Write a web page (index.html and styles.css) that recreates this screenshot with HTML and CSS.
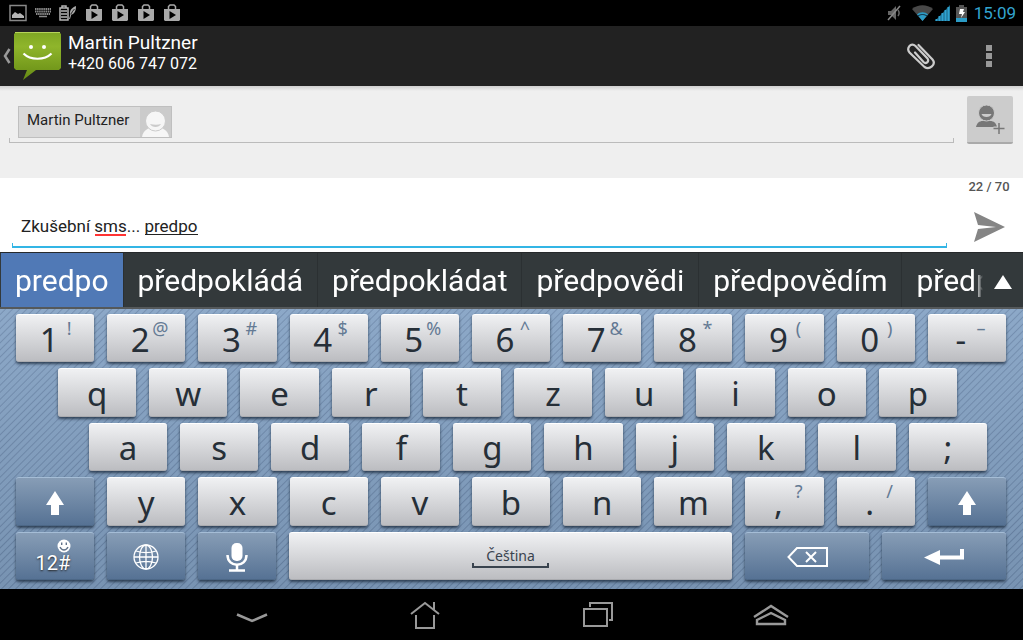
FILE: index.html
```
<!DOCTYPE html>
<html lang="cs">
<head>
    <meta charset="UTF-8">
    <meta name="viewport" content="width=device-width, initial-scale=1.0">
    <title>Martin Pultzner</title>
    <link rel="stylesheet" href="styles.css">
</head>
<body>
    <svg class="defs" aria-hidden="true">
        <symbol id="store" viewBox="0 0 18 18">
            <path d="M1 5h16v11l-1 1H2l-1-1z" fill="#a9a9a9"/>
            <path d="M5.500 5V2.500L7 1h4l1.500 1.500V5" fill="none" stroke="#a9a9a9" stroke-width="1.500"/>
            <path d="M6.500 7v8l6.500-4z" fill="#000"/>
        </symbol>
        <symbol id="shift" viewBox="0 0 18 24">
            <path d="M9 0l9 14h-5v10H5V14H0z" fill="#fff"/>
        </symbol>
    </svg>

    <div class="screen">
        <div class="status-bar">
            <div class="status-icons">
                <svg width="18" height="18" viewBox="0 0 18 18"><path d="M1 1.500h16v15H1z" fill="none" stroke="#888" stroke-width="1.500"/><path d="M3 14v-3l3-3 3 2 2-1 4 3v2z" fill="#b5b5b5"/></svg>
                <svg width="16" height="10" viewBox="0 0 16 10"><path d="M0 1h16M0 3.500h16M1 6h14" stroke="#8a8a8a" stroke-width="1.800" stroke-dasharray="1.500 .6"/><path d="M4 8.500h8" stroke="#8a8a8a" stroke-width="1.500"/></svg>
                <svg width="18" height="16" viewBox="0 0 18 16"><path d="M1 3h8v12H1zM3 3V1h4v2M2 6h6M2 9h6M2 12h6" fill="none" stroke="#b5b5b5" stroke-width="1.500"/><path d="M17 1c-5 2-7 5-5.500 9 4-1 5.500-4 5.500-9z" fill="#a9a9a9"/><path d="M10.500 14c1-4 2-7 5-10" fill="none" stroke="#000" stroke-width=".8"/><path d="M10.500 14l1.500-5" stroke="#a9a9a9"/></svg>
                <svg width="18" height="18"><use href="#store"/></svg>
                <svg width="18" height="18"><use href="#store"/></svg>
                <svg width="18" height="18"><use href="#store"/></svg>
                <svg width="18" height="18"><use href="#store"/></svg>
            </div>
            <div class="status-info">
                <svg class="mute" width="14" height="16" viewBox="0 0 14 16"><path d="M1 6h3l5-5v14l-5-5H1z" fill="#666"/><path d="M11 5c1.500 2 1.500 4 0 6" fill="none" stroke="#666" stroke-width="1.500"/><path d="M13 1L1 15" stroke="#888" stroke-width="1.500"/></svg>
                <svg width="21" height="16" viewBox="0 0 21 16"><path d="M0 4C6-1 15-1 21 4L10.500 16z" fill="#484848"/><path d="M5 9.500c3-3 8-3 11 0L10.500 16z" fill="#2c9cc6"/><path d="M6 11c3-2 6-2 9 0" fill="none" stroke="#123" stroke-width="1"/></svg>
                <svg width="15" height="16" viewBox="0 0 15 16"><path d="M0 16L15 0v16z" fill="#1c6785"/><path d="M1.500 16v-2M4.500 16v-5M7.500 16V8M10.500 16V5M13.500 16V2" stroke="#2fa3d0" stroke-width="2"/></svg>
                <svg class="battery" width="11" height="17" viewBox="0 0 11 17"><path d="M0 2h3V0h5v2h3v15H0z" fill="#555"/><path d="M0 13h11v4H0z" fill="#2c9cc6"/><path d="M4 4h4L7 7h2l-4 6 1-4H3z" fill="#fff"/></svg>
                <span class="clock">15:09</span>
            </div>
        </div>

        <header class="action-bar">
            <button class="back" aria-label="Zpět">
                <svg width="8" height="16" viewBox="0 0 8 16"><path d="M6.500 1L2 8l4.500 7" fill="none" stroke="#999" stroke-width="2.500"/></svg>
                <svg width="47" height="49" viewBox="0 0 47 49">
                    <defs><linearGradient id="green" x2="0" y2="1"><stop offset="0" stop-color="#7ea623"/><stop offset=".3" stop-color="#8fb52b"/><stop offset="1" stop-color="#668b14"/></linearGradient></defs>
                    <path d="M2 0h43l2 2v34l-2 2H22L9 48l4-10H2l-2-2V2z" fill="url(#green)"/>
                    <path d="M1 .5h45" stroke="#b6d45a"/>
                    <circle cx="17" cy="15" r="2" fill="#fff"/><circle cx="30" cy="15" r="2" fill="#fff"/>
                    <path d="M9.500 21.500c7 7 21 7 28 0" fill="none" stroke="#fff" stroke-width="2.200"/>
                </svg>
            </button>
            <div class="contact">
                <h1>Martin Pultzner</h1>
                <p>+420 606 747 072</p>
            </div>
            <button class="bar-button attach" aria-label="Přiložit">
                <svg width="29" height="27" viewBox="0 0 29 27"><path d="M11.500 2l14 14.500c4 5-3 11-8 7.500L2.500 9.500C-1 5 4-1 8.500 3L20.500 15.500c2 3-1.500 6-4 3.500L8 9.500" fill="none" stroke="#ccc" stroke-width="2.200" stroke-linecap="round"/></svg>
            </button>
            <button class="bar-button" aria-label="Další možnosti">
                <svg width="6" height="22" viewBox="0 0 6 22"><path d="M0 0h6v6H0zM0 8h6v6H0zM0 16h6v6H0z" fill="#999"/></svg>
            </button>
        </header>

        <section class="recipients">
            <div class="recipient-field">
                <button class="chip">
                    <span>Martin Pultzner</span>
                    <svg width="31" height="30" viewBox="0 0 31 30"><path d="M0 0h31v30H0z" fill="#cbcbcb"/><path d="M2 30c1-7 7-10 13.500-10S28 23 29 30z" fill="#f6f6f6"/><circle cx="15.500" cy="14" r="10" fill="#f6f6f6" stroke="#cbcbcb"/><path d="M10 17c4 1 8 1 11 0-2 4-9 4-11 0z" fill="#cbcbcb"/></svg>
                </button>
                <input class="recipient-input" type="text" aria-label="Příjemce">
            </div>
            <button class="add-contact" aria-label="Přidat příjemce">
                <svg width="30" height="30" viewBox="0 0 30 30"><path d="M0 23c1-4 3-6 7-6h7c4 0 6 2 7 6z" fill="#777"/><circle cx="10.500" cy="9" r="8" fill="#777" stroke="#ccc"/><path d="M5.500 10h10c-1 4-9 4-10 0z" fill="#ccc"/><path d="M23 19v11M17.500 24.500h11" stroke="#ccc" stroke-width="4"/><path d="M23 19v11M17.500 24.500h11" stroke="#777" stroke-width="1.500"/></svg>
            </button>
        </section>

        <section class="compose">
            <input class="message" type="text" aria-label="Zpráva" value="Zkušební sms... predpo">
            <div class="send-box">
                <span class="counter">22 / 70</span>
                <button class="send" aria-label="Odeslat">
                    <svg width="31" height="30" viewBox="0 0 31 30"><path d="M0 0l31 15L0 30l4-13 18-2L4 13z" fill="#858585"/></svg>
                </button>
            </div>
        </section>

        <div class="suggestions">
            <div class="words">
                <button class="word active">predpo</button>
                <button class="word">předpokládá</button>
                <button class="word">předpokládat</button>
                <button class="word">předpovědi</button>
                <button class="word">předpovědím</button>
                <button class="word">předp</button>
            </div>
            <button class="more" aria-label="Více návrhů">
                <svg width="18" height="14" viewBox="0 0 18 14"><path d="M9 0l9 14H0z" fill="#fff"/></svg>
            </button>
        </div>

        <div class="keyboard">
            <div class="row">
                <button class="key dual"><span>1</span><small>!</small></button>
                <button class="key dual"><span>2</span><small>@</small></button>
                <button class="key dual"><span>3</span><small>#</small></button>
                <button class="key dual"><span>4</span><small>$</small></button>
                <button class="key dual"><span>5</span><small>%</small></button>
                <button class="key dual"><span>6</span><small>^</small></button>
                <button class="key dual"><span>7</span><small>&amp;</small></button>
                <button class="key dual"><span>8</span><small>*</small></button>
                <button class="key dual"><span>9</span><small>(</small></button>
                <button class="key dual"><span>0</span><small>)</small></button>
                <button class="key dual"><span>-</span><small>–</small></button>
            </div>
            <div class="row row-q">
                <button class="key">q</button>
                <button class="key">w</button>
                <button class="key">e</button>
                <button class="key">r</button>
                <button class="key">t</button>
                <button class="key">z</button>
                <button class="key">u</button>
                <button class="key">i</button>
                <button class="key">o</button>
                <button class="key">p</button>
            </div>
            <div class="row row-a">
                <button class="key">a</button>
                <button class="key">s</button>
                <button class="key">d</button>
                <button class="key">f</button>
                <button class="key">g</button>
                <button class="key">h</button>
                <button class="key">j</button>
                <button class="key">k</button>
                <button class="key">l</button>
                <button class="key">;</button>
            </div>
            <div class="row">
                <button class="key blue" aria-label="Shift"><svg width="18" height="24"><use href="#shift"/></svg></button>
                <button class="key">y</button>
                <button class="key">x</button>
                <button class="key">c</button>
                <button class="key">v</button>
                <button class="key">b</button>
                <button class="key">n</button>
                <button class="key">m</button>
                <button class="key dual"><span>,</span><small>?</small></button>
                <button class="key dual"><span>.</span><small>/</small></button>
                <button class="key blue" aria-label="Shift"><svg width="18" height="24"><use href="#shift"/></svg></button>
            </div>
            <div class="row row-space">
                <button class="key blue symbols">
                    <svg width="14" height="14" viewBox="0 0 14 14"><circle cx="7" cy="7" r="6.500" fill="#fff"/><path d="M4.700 3.500v2.500M9.300 3.500v2.500M3 8c2 4 6 4 8 0" fill="none" stroke="#61738a" stroke-width="1.400"/></svg>
                    <span>12#</span>
                </button>
                <button class="key blue" aria-label="Jazyk">
                    <svg width="26" height="26" viewBox="0 0 26 26" fill="none" stroke="#fff" stroke-width="1.300"><circle cx="13" cy="13" r="12"/><ellipse cx="13" cy="13" rx="6.500" ry="12"/><path d="M13 1v24M1 13h24M3 7c6 2 14 2 20 0M3 19c6-2 14-2 20 0"/></svg>
                </button>
                <button class="key blue" aria-label="Hlasové zadávání">
                    <svg width="22" height="29" viewBox="0 0 22 29"><rect x="5.500" y="0" width="11" height="18" rx="5" fill="#fff"/><path d="M1.500 12c0 13 19 13 19 0M11 22v5M3 27.500h16" fill="none" stroke="#fff" stroke-width="2.500"/></svg>
                </button>
                <button class="key space"><span>Čeština</span></button>
                <button class="key blue" aria-label="Smazat">
                    <svg width="41" height="20" viewBox="0 0 41 20" fill="none" stroke="#fff" stroke-width="2"><path d="M10 1h30v18H10L1.500 10z"/><path d="M19 5l10 10M29 5L19 15"/></svg>
                </button>
                <button class="key blue" aria-label="Enter">
                    <svg width="40" height="16" viewBox="0 0 40 16"><path d="M0 8.500L16 1v5.500h20V0h4v10.500H16V16z" fill="#fff"/></svg>
                </button>
            </div>
        </div>

        <nav class="nav-bar">
            <button aria-label="Skrýt klávesnici"><svg width="32" height="16" viewBox="0 0 32 16"><path d="M1 7.500l15 6.500 15-6.500" fill="none" stroke="#999" stroke-width="2.500"/></svg></button>
            <button aria-label="Domů"><svg width="30" height="28" viewBox="0 0 30 28"><path d="M1 13L15 2l14 11M24 9V1M6 14v13h18V14" fill="none" stroke="#999" stroke-width="2"/></svg></button>
            <button aria-label="Poslední aplikace"><svg width="30" height="25" viewBox="0 0 30 25"><path d="M1 7h23v17H1zM7 5V1h22v17h-3" fill="none" stroke="#999" stroke-width="2"/></svg></button>
            <button aria-label="Panel aplikací"><svg width="36" height="22" viewBox="0 0 36 22"><path d="M1 13L18 2l17 11M4 20v-4l14-7 14 7v4z" fill="none" stroke="#999" stroke-width="2.400"/></svg></button>
        </nav>
    </div>
</body>
</html>
```
FILE: styles.css
```
* {
    box-sizing: border-box;
    margin: 0;
    padding: 0;
}

body {
    background-color: #000;
    font-family: Roboto, "Noto Sans", sans-serif;
}

button, input {
    background: none;
    border: none;
    font-family: inherit;
    color: inherit;
}

button { cursor: pointer; }
svg { display: block; flex: none; }
.defs { position: absolute; width: 0; height: 0; }

.screen {
    min-height: 100vh;
    display: flex;
    flex-direction: column;
}

/* status bar */
.status-bar {
    height: 26px;
    padding: 0 7px 0 9px;
    display: flex;
    align-items: center;
    justify-content: space-between;
}

.status-icons {
    display: flex;
    align-items: center;
    gap: 8px;
}

.status-info {
    display: flex;
    align-items: center;
    gap: 2px;
}

.mute { margin-right: 9px; }
.battery { margin: 0 5px 0 4px; }

.clock {
    font-size: 17px;
    line-height: 24px;
    color: #33a5d0;
}

/* action bar */
.action-bar {
    height: 60px;
    padding: 0 4px 0 3px;
    display: flex;
    align-items: center;
    background-color: #222;
    color: #fff;
}

.back {
    display: flex;
    align-items: center;
    gap: 3px;
}

.contact {
    flex: 1;
    padding: 0 0 6px 7px;
}

.contact h1 {
    font-size: 19px;
    line-height: 22px;
    font-weight: 400;
}

.contact p {
    font-size: 16px;
    line-height: 20px;
}

.bar-button {
    width: 60px;
    height: 60px;
    margin-left: 4px;
    display: flex;
    align-items: center;
    justify-content: center;
}

.attach { margin-right: 4px; }

/* recipients */
.recipients {
    height: 92px;
    padding: 10px 10px 0 9px;
    display: flex;
    gap: 13px;
    background: linear-gradient(#d0d0d0, #efefef 5px);
}

.recipient-field {
    flex: 1;
    height: 47px;
    padding: 10px 9px 0;
    display: flex;
    align-items: flex-start;
    border-bottom: 1px solid #bbb;
    background:
        linear-gradient(#bbb, #bbb) left bottom / 1px 4px no-repeat,
        linear-gradient(#bbb, #bbb) right bottom / 1px 4px no-repeat;
}

.chip {
    height: 32px;
    display: flex;
    align-items: center;
    justify-content: space-between;
    background-color: #dadada;
    border: 1px solid #bfbfbf;
    font-size: 15px;
    color: #222;
}

.chip span { padding: 0 11px 4px 8px; }

.recipient-input {
    flex: 1;
    height: 32px;
    outline: none;
}

.add-contact {
    width: 46px;
    height: 48px;
    padding-left: 2px;
    display: flex;
    align-items: center;
    justify-content: center;
    background-color: #ccc;
    border-bottom: 2px solid #aaa;
    border-radius: 2px;
}

/* message */
.compose {
    height: 74px;
    padding: 0 12px;
    display: flex;
    gap: 20px;
    background-color: #fff;
}

.message {
    flex: 1;
    height: 44px;
    margin-top: 26px;
    padding: 0 9px;
    outline: none;
    font-size: 17px;
    color: #222;
    /* field outline, then the spelling and composing underlines */
    background:
        linear-gradient(#33b5e5, #33b5e5) left bottom / 100% 2px no-repeat,
        linear-gradient(#33b5e5, #33b5e5) left bottom / 1px 5px no-repeat,
        linear-gradient(#33b5e5, #33b5e5) right bottom / 1px 5px no-repeat,
        linear-gradient(#f33, #f33) 83px 30px / 31px 2px no-repeat,
        linear-gradient(#222, #222) 133px 30px / 53px 1px no-repeat;
}

.send-box {
    width: 44px;
    display: flex;
    flex-direction: column;
    align-items: center;
}

.counter {
    font-size: 13px;
    line-height: 18px;
    font-weight: 500;
    color: #555;
    white-space: nowrap;
}

.send { margin-top: 16px; }

/* suggestions */
.suggestions {
    height: 57px;
    display: flex;
    background-color: #33393b;
    border-top: 1px solid #26292b;
    border-bottom: 2px solid #55595b;
    color: #fff;
}

.words {
    flex: 1;
    min-width: 0;
    display: flex;
    overflow: hidden;
    -webkit-mask-image: linear-gradient(to left, transparent, #000 8px);
    mask-image: linear-gradient(to left, transparent, #000 8px);
}

.word {
    flex: none;
    padding: 0 14px;
    border-right: 1px solid #2b3032;
    font-size: 30px;
}

.active {
    background-color: #5079b6;
    border-left: 1px solid #33393b;
}

.more {
    width: 40px;
    padding-top: 4px;
    display: flex;
    align-items: center;
    justify-content: center;
}

/* keyboard */
.keyboard {
    flex: 1;
    min-height: 280px;
    padding: 5px 17px 9px 16px;
    display: grid;
    grid-template-rows: repeat(5, 1fr);
    gap: 6px;
    background:
        linear-gradient(#ffffff12, #00000018),
        repeating-linear-gradient(135deg, #84a2c4 0 3px, #6d89ac 4px, #84a2c4 5px);
    font-family: "Noto Sans", "Open Sans", sans-serif;
}

.row {
    display: grid;
    grid-template-columns: repeat(11, 1fr);
    gap: 13px;
}

.row-q, .row-a { grid-template-columns: repeat(10, 1fr); }
.row-q { padding: 0 49px 0 42px; }
.row-a { padding: 0 19px 0 73px; }
.row-space { grid-template-columns: 78fr 78fr 78fr 443fr 124fr 124fr; }

.key {
    min-width: 0;
    padding-top: 3px;
    display: flex;
    align-items: center;
    justify-content: center;
    background: linear-gradient(#f0f1f3, #bcbdc1);
    border-top: 1px solid #fff;
    border-bottom: 1px solid #aaabaf;
    border-radius: 3px;
    box-shadow: 0 2px 3px #1b2a3dcc;
    font-size: 33px;
    line-height: 40px;
    color: #262f38;
}

.dual {
    padding: 5px 0 0 8px;
    align-items: flex-start;
}

.dual span, .dual small {
    width: 20px;
    display: flex;
    justify-content: center;
}

.dual small {
    font-size: 18px;
    line-height: 16px;
    color: #647a94;
}

.blue {
    background: linear-gradient(#879db6, #567294);
    border-top-color: #a5bdd6;
    border-bottom-color: #4c6786;
    color: #fff;
}

.symbols {
    padding-top: 0;
    flex-direction: column;
    font-family: Roboto, sans-serif;
    font-size: 20px;
    line-height: 20px;
    text-shadow: 0 1px 2px #222;
}

.symbols svg { margin-left: 18px; }
.symbols span { margin-right: 4px; }

.space span {
    width: 77px;
    border: 2px solid #39434e;
    border-top: none;
    /* only the foot of the side borders shows */
    border-image: linear-gradient(to top, #39434e 5px, transparent 5px) 2;
    font-size: 14px;
    line-height: 20px;
    color: #39434e;
}

/* navigation */
.nav-bar {
    height: 51px;
    display: flex;
    align-items: center;
    justify-content: center;
}

.nav-bar button {
    width: 173px;
    height: 51px;
    display: flex;
    align-items: center;
    justify-content: center;
}
```
